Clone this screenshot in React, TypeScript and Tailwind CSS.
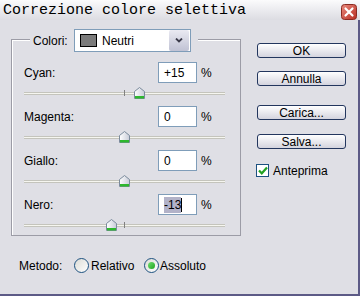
import React from 'react';

const ui = { fontFamily: '"Liberation Sans", Arial, sans-serif' };

const ROWS = [
  { label: 'Cyan:', value: '+15', pos: 15, tick: true },
  { label: 'Magenta:', value: '0', pos: 0, tick: false },
  { label: 'Giallo:', value: '0', pos: 0, tick: false },
  { label: 'Nero:', value: '-13', pos: -13, tick: true, selected: true },
];

function Thumb() {
  return (
    <svg width="11" height="12" viewBox="0 0 11 12">
      <defs>
        <linearGradient id="tg" x1="0" x2="1" y1="0" y2="0">
          <stop offset="0" stopColor="#ffffff" />
          <stop offset="1" stopColor="#c8ccd8" />
        </linearGradient>
      </defs>
      <path d="M0.5 4.5 L5.5 0.5 L10.5 4.5 L10.5 11.5 L0.5 11.5 Z" fill="url(#tg)" stroke="#7b8a9c" />
      <rect x="1" y="9" width="9" height="2.5" fill="#2eb82e" />
    </svg>
  );
}

function Slider({ pos, tick }: { pos: number; tick: boolean }) {
  return (
    <div className="relative ml-[12px] flex h-[12px] w-[201px] items-center">
      <div className="h-[3px] w-full border-y border-[#c4c4bc] bg-[#f6f6f0]" />
      {tick && <div className="absolute left-[100px] top-[3px] h-[6px] w-px bg-[#808080]" />}
      <div className="absolute top-0" style={{ left: 100 + pos - 5 }}>
        <Thumb />
      </div>
    </div>
  );
}

function Btn({ children, className = '' }: { children: React.ReactNode; className?: string }) {
  return (
    <div
      className={`flex h-[15px] w-[89px] items-center justify-center rounded-[3px] border border-[#23365e] bg-gradient-to-b from-white to-[#d4d4de] text-[12px] leading-none text-black ${className}`}
    >
      {children}
    </div>
  );
}

function Radio({ on }: { on: boolean }) {
  return (
    <div className="flex h-[15px] w-[15px] items-center justify-center rounded-full border border-[#1c5180] bg-gradient-to-br from-[#dcdcd6] to-white">
      {on && <div className="h-[7px] w-[7px] rounded-full bg-gradient-to-br from-[#6ee06e] to-[#17a317]" />}
    </div>
  );
}

export default function App() {
  return (
    <div className="flex h-[296px] w-[360px] flex-col bg-[#dfdfe5]" style={ui}>
      <div className="flex h-[20px] items-center justify-between bg-gradient-to-b from-[#fbfbfc] to-[#dcdce2] pl-[3px] pr-[3px]">
        <span className="text-[15px] leading-none text-black" style={{ fontFamily: '"Liberation Mono", "Courier New", monospace' }}>
          Correzione colore selettiva
        </span>
        <svg width="16" height="16" viewBox="0 0 16 16" className="mt-[3px]">
          <defs>
            <linearGradient id="cg" x1="0" x2="1" y1="0" y2="1">
              <stop offset="0" stopColor="#e98a7e" />
              <stop offset="1" stopColor="#b82e22" />
            </linearGradient>
          </defs>
          <rect x="0.5" y="0.5" width="15" height="15" rx="3" fill="url(#cg)" stroke="#8a2a22" />
          <path d="M4.5 4.5 L11.5 11.5 M11.5 4.5 L4.5 11.5" stroke="#fff" strokeWidth="2.2" strokeLinecap="round" />
        </svg>
      </div>

      <div className="flex flex-1 flex-col border-b-2 border-r-2 border-[#5c5a86] text-[12px] leading-none text-black">
        <div className="flex">
          <div className="ml-[11px] mt-[19px] flex h-[197px] w-[230px] flex-col border border-[#9c9ca6] shadow-[inset_1px_1px_0_#ffffff]">
            <div className="-mt-[11px] ml-[18px] flex w-fit items-center bg-[#dfdfe5] pl-[3px] pr-[7px]">
              <span className="w-[41px]">Colori:</span>
              <div className="flex h-[23px] w-[117px] items-center border border-[#7f9db9] bg-white pl-[5px] pr-px">
                <div className="h-[13px] w-[17px] border border-black bg-[#7b7b7b]" />
                <span className="ml-[5px] flex-1">Neutri</span>
                <div className="flex h-[21px] w-[20px] items-center justify-center rounded-[2px] bg-gradient-to-b from-[#eaeaf2] to-[#c0c2d4]">
                  <svg width="8" height="5" viewBox="0 0 8 5">
                    <path d="M1 0.5 L4 3.5 L7 0.5" stroke="#3a3a4a" strokeWidth="1.8" fill="none" />
                  </svg>
                </div>
              </div>
            </div>

            <div className="mt-[10px] flex flex-col">
              {ROWS.map((r) => (
                <div key={r.label} className="flex h-[44px] flex-col">
                  <div className="flex h-[21px] items-center">
                    <span className="w-[146px] pl-[12px]">{r.label}</span>
                    <div className="flex h-[21px] w-[39px] items-center border border-[#7f9db9] bg-white pl-[5px]">
                      {r.selected ? (
                        <>
                          <span className="bg-[#b2b2c8] py-[2px]">{r.value}</span>
                          <span className="h-[14px] w-px bg-black" />
                        </>
                      ) : (
                        <span>{r.value}</span>
                      )}
                    </div>
                    <span className="ml-[4px]">%</span>
                  </div>
                  <div className="mt-[4px]">
                    <Slider pos={r.pos} tick={r.tick} />
                  </div>
                </div>
              ))}
            </div>
          </div>

          <div className="ml-[16px] mt-[23px] flex flex-col">
            <Btn>OK</Btn>
            <Btn className="mt-[13px]">Annulla</Btn>
            <Btn className="mt-[19px]">Carica...</Btn>
            <Btn className="mt-[14px]">Salva...</Btn>
            <div className="-ml-px mt-[15px] flex items-center">
              <div className="flex h-[13px] w-[13px] items-center justify-center border border-[#1c5180] bg-white">
                <svg width="10" height="9" viewBox="0 0 10 9">
                  <path d="M1 4.5 L3.8 7.3 L9 1.5" stroke="#21a121" strokeWidth="2.2" fill="none" />
                </svg>
              </div>
              <span className="ml-[4px]">Anteprima</span>
            </div>
          </div>
        </div>

        <div className="ml-[19px] mt-[22px] flex h-[15px] items-center">
          <span className="w-[55px]">Metodo:</span>
          <Radio on={false} />
          <span className="ml-[2px] w-[53px]">Relativo</span>
          <Radio on={true} />
          <span className="ml-[1px]">Assoluto</span>
        </div>
      </div>
    </div>
  );
}
